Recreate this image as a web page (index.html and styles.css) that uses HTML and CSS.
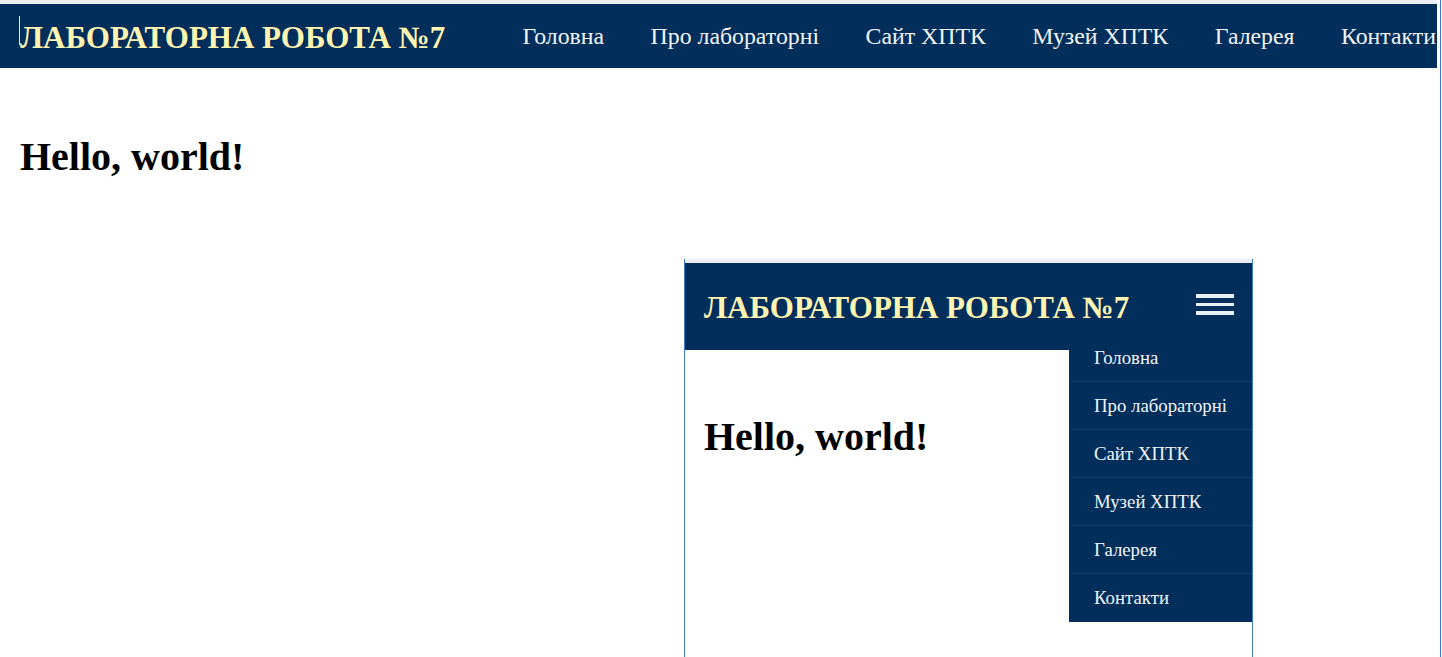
FILE: index.html
```html
<!DOCTYPE html>
<html lang="uk">
<head>
<meta charset="utf-8">
<title>Лабораторна робота №7</title>
<link rel="stylesheet" href="styles.css">
</head>
<body>
<div class="page">
  <div class="topstrip"></div>
  <header class="site-header">
    <div class="brand"><span class="caret"></span>ЛАБОРАТОРНА РОБОТА №7</div>
    <nav class="site-nav">
      <a href="#">Головна</a>
      <a href="#">Про лабораторні</a>
      <a href="#">Сайт ХПТК</a>
      <a href="#">Музей ХПТК</a>
      <a href="#">Галерея</a>
      <a href="#">Контакти</a>
    </nav>
  </header>
  <h1 class="main-title">Hello, world!</h1>

  <div class="preview">
    <div class="preview-strip"></div>
    <header class="m-header">
      <div class="m-brand">ЛАБОРАТОРНА РОБОТА №7</div>
      <div class="burger"><span></span><span></span><span></span></div>
    </header>
    <ul class="m-menu">
      <li>Головна</li>
      <li>Про лабораторні</li>
      <li>Сайт ХПТК</li>
      <li>Музей ХПТК</li>
      <li>Галерея</li>
      <li>Контакти</li>
    </ul>
    <h1 class="m-title">Hello, world!</h1>
  </div>
</div>
</body>
</html>
```
FILE: styles.css
```css
html, body {
  margin: 0;
  padding: 0;
  background: #ffffff;
  overflow: hidden;
}
body {
  font-family: "Liberation Serif", "Times New Roman", serif;
  color: #000;
}
.page {
  width: 1440px;
  height: 657px;
  border-right: 1px solid #3d7cc4;
  box-sizing: content-box;
}
.topstrip {
  height: 4px;
  width: 1437px;
  background: #eceef6;
}
.site-header {
  width: 1437px;
  height: 64px;
  background: #012e5b;
  display: flex;
  align-items: center;
  box-sizing: border-box;
  padding-left: 20px;
  padding-right: 1px;
  overflow: hidden;
}
.brand {
  position: relative;
  font-weight: bold;
  font-size: 31px;
  color: #fff5b1;
  line-height: 1;
  padding-top: 2px;
  white-space: nowrap;
}
.caret {
  position: absolute;
  left: -1px;
  top: -4px;
  width: 1px;
  height: 29px;
  background: #e8eaf0;
}
.site-nav {
  margin-left: auto;
  display: flex;
  gap: 46.5px;
  white-space: nowrap;
}
.site-nav a {
  color: #f2f4f8;
  text-decoration: none;
  font-size: 23.8px;
  line-height: 1;
  padding-top: 2px;
}
.main-title {
  margin: 66px 0 0 20px;
  font-size: 40px;
  font-weight: bold;
  line-height: 46px;
}
.preview {
  position: relative;
  margin: 79px 0 0 684px;
  width: 567px;
  height: 420px;
  border-left: 1px solid #3d7cc4;
  border-right: 1px solid #3d7cc4;
}
.preview-strip {
  height: 4px;
  background: #eceef6;
}
.m-header {
  position: relative;
  z-index: 2;
  height: 87px;
  background: #012e5b;
  display: flex;
  align-items: center;
  justify-content: space-between;
  padding: 0 18px 0 19px;
}
.m-brand {
  font-weight: bold;
  font-size: 31px;
  color: #fff5b1;
  line-height: 1;
  padding-top: 2px;
  white-space: nowrap;
}
.burger {
  display: flex;
  flex-direction: column;
  gap: 5px;
  width: 38px;
  padding-bottom: 4px;
}
.burger span {
  display: block;
  height: 3.5px;
  background: #e9effa;
}
.m-menu {
  position: absolute;
  z-index: 1;
  top: 75px;
  right: 0;
  width: 183px;
  margin: 0;
  padding: 0;
  list-style: none;
  background: #012e5b;
}
.m-menu li {
  height: 48px;
  box-sizing: border-box;
  padding-left: 25px;
  display: flex;
  align-items: center;
  color: #f2f4f8;
  font-size: 18.8px;
  border-bottom: 1px solid #0f3d6b;
  white-space: nowrap;
}
.m-menu li:last-child {
  border-bottom: none;
}
.m-title {
  margin: 64px 0 0 19px;
  font-size: 40px;
  font-weight: bold;
  line-height: 46px;
}
```
